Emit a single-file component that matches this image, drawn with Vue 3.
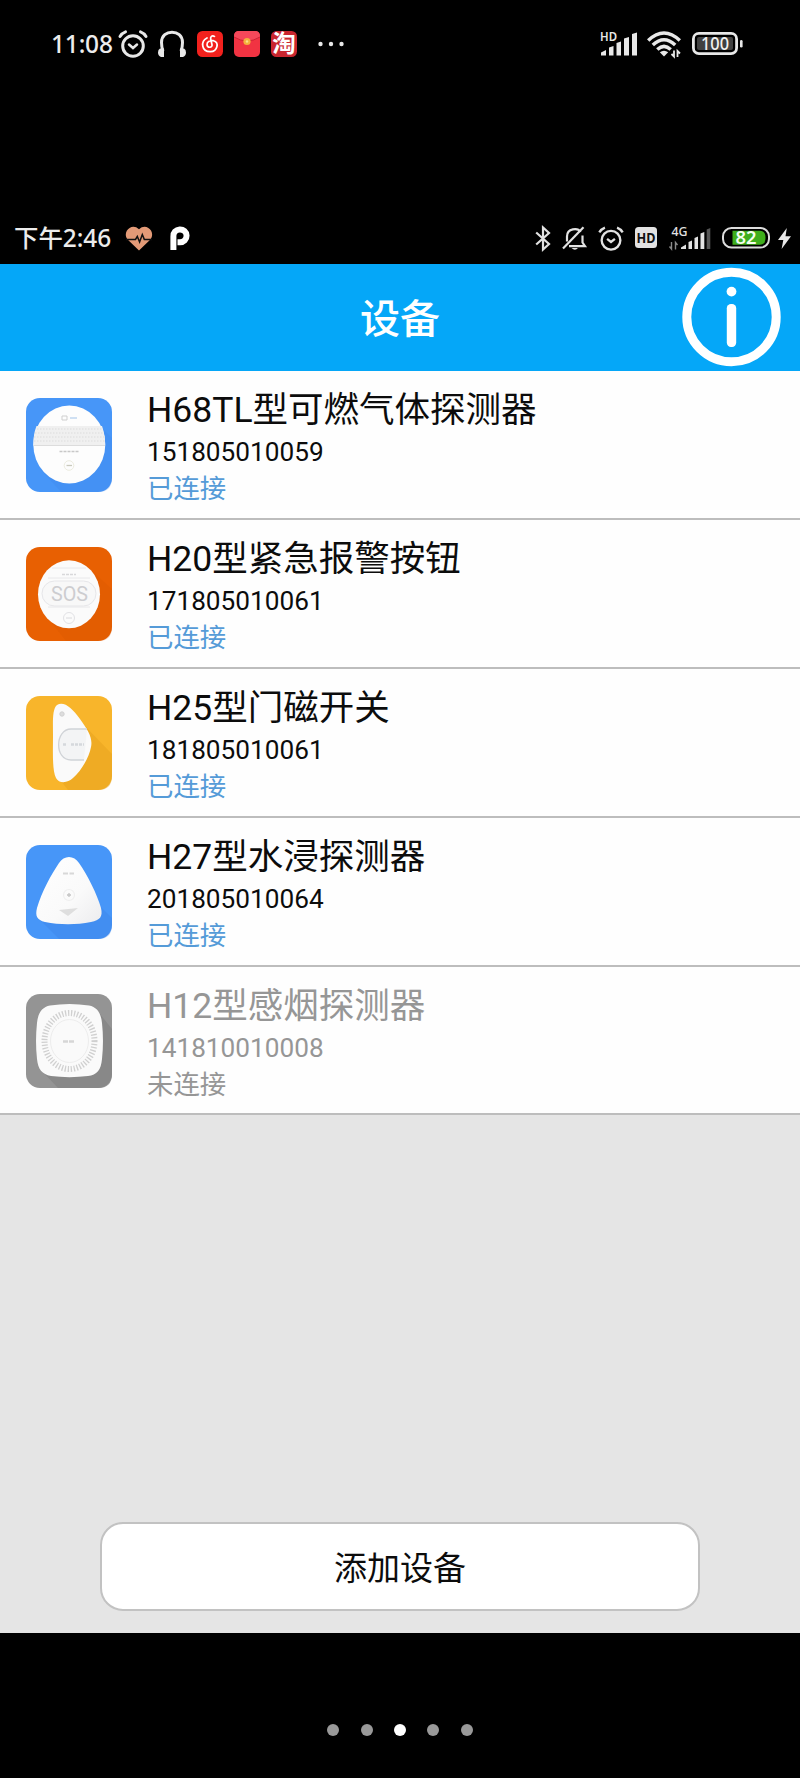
<template>
  <div class="screen">
    <div class="phone-bar">
      <span class="clock">11:08</span>
      <svg class="alarm" width="30" height="28" viewBox="0 0 30 28">
        <g fill="none" stroke="#e8e8e8" stroke-width="3" stroke-linecap="round">
          <circle cx="15" cy="16" r="10.3" />
          <path d="M2 6.5 Q4 3 7.5 1.8 M28 6.5 Q26 3 22.5 1.8" />
          <path d="M11 14.5 L15 18 L19 14.5" stroke-width="2.5" />
        </g>
      </svg>
      <svg class="phones" width="28" height="28" viewBox="0 0 28 28">
        <path d="M5 21 Q3.5 17 3.5 12.5 C3.5 -1.3 24.5 -1.3 24.5 12.5 Q24.5 17 23 21" fill="none" stroke="#e8e8e8" stroke-width="3" />
        <path d="M2 18.5 H6 V27 H3 Q0 25.5 0 22.5 Q0 19.5 2 18.5Z M26 18.5 H22 V27 H25 Q28 25.5 28 22.5 Q28 19.5 26 18.5Z" fill="#e8e8e8" />
      </svg>
      <svg class="app" width="26" height="26" viewBox="0 0 26 26">
        <rect width="26" height="26" rx="5.5" fill="#f2211d" />
        <path d="M17.5 5.4 C15 4 13.2 5.8 13.7 8.2 L15 13.5 C15.7 17 10.3 17.3 10 13.6 C9.8 10.5 13.5 9 16.5 9.7 C22.5 11.5 20.5 20.5 13.5 20.7 C4.5 21 3.2 10.5 10 7" fill="none" stroke="#fff" stroke-width="1.7" stroke-linecap="round" />
      </svg>
      <svg class="app" width="26" height="26" viewBox="0 0 26 26">
        <rect width="26" height="26" rx="5" fill="#f13342" />
        <path d="M0 5 Q0 0 5 0 H21 Q26 0 26 5 V6 Q13 14 0 6Z" fill="#f5485a" />
        <path d="M0 6 Q13 14 26 6" fill="none" stroke="#c81f30" stroke-width=".9" />
        <circle cx="13" cy="10.5" r="3.6" fill="#f3b13c" />
        <circle cx="13" cy="10.5" r="1.2" fill="#fbe08a" />
      </svg>
      <svg class="app" width="26" height="26" viewBox="0 0 26 26">
        <rect width="26" height="26" rx="5.5" fill="#c9262f" />
        <text x="13" y="21.3" text-anchor="middle" font-size="23.5" font-weight="700" fill="#fff">淘</text>
      </svg>
      <svg class="more" width="26" height="6" viewBox="0 0 26 6" fill="#e8e8e8">
        <circle cx="2.5" cy="3" r="2.2" /><circle cx="13" cy="3" r="2.2" /><circle cx="23.5" cy="3" r="2.2" />
      </svg>

      <svg class="push" width="38" height="26" viewBox="0 0 38 26" fill="#e8e8e8">
        <text x="0" y="9.6" font-size="12.5" font-weight="600" textLength="17" lengthAdjust="spacingAndGlyphs">HD</text>
        <path d="M1 24.5 V21.5 L6 19 V24.5Z M9 24.5 V16.5 L13.5 15 V24.5Z M16.5 24.5 V12 L21 10.5 V24.5Z M24 24.5 V7.5 L29 6 V24.5Z M32 24.5 V3 L37 1.5 V24.5Z" />
      </svg>
      <svg class="wifi" width="34" height="27" viewBox="0 0 34 27">
        <g fill="none" stroke="#e8e8e8" stroke-width="3.5">
          <path d="M1.2 9.5 Q17 -5.5 32.8 9.5" />
          <path d="M5.8 14 Q17 3.5 28.2 14" />
          <path d="M10.3 18.5 Q17 12.2 23.7 18.5" />
        </g>
        <path d="M12.8 21.3 Q17 18.2 21.2 21.3 L17 25.5Z" fill="#e8e8e8" />
        <path d="M27 19.5 V25.5 L24.5 23 M30.5 26 V20 L33 22.5" fill="none" stroke="#e8e8e8" stroke-width="1.8" />
      </svg>
      <svg class="battery" width="51" height="24" viewBox="0 0 51 24">
        <rect x="1.4" y="1.4" width="43.2" height="20.2" rx="5.5" fill="none" stroke="#e8e8e8" stroke-width="2.8" />
        <rect x="5" y="5" width="36" height="13" rx="2" fill="#404040" />
        <rect x="48" y="8" width="2.6" height="7.5" rx="1.3" fill="#e8e8e8" />
        <text x="23" y="17.8" text-anchor="middle" font-size="17.5" font-weight="500" fill="#f2f2f2" textLength="28" lengthAdjust="spacingAndGlyphs">100</text>
      </svg>
    </div>

    <div class="inner-bar">
      <span class="clock">下午2:46</span>
      <svg class="heart" width="28" height="25" viewBox="0 0 28 25">
        <path d="M14 24.5 L2.3 13.2 C-3 5.5 7 -4 14 3.2 C21 -4 31 5.5 25.7 13.2Z" fill="#e39a77" />
        <path d="M1 13.4 H10.5 L12.3 10.5 L14.6 16 L17.3 8.5 L19.3 13.4 H27" fill="none" stroke="#111" stroke-width="1.5" />
      </svg>
      <svg class="letter" width="20" height="25" viewBox="0 0 20 25">
        <path d="M3.4 24 V10.3 A6.6 6.4 0 1 1 10 16.2 H7.5" fill="none" stroke="#fff" stroke-width="6" />
      </svg>

      <svg class="push" width="16" height="25" viewBox="0 0 16 25">
        <path d="M1.2 6.5 L14 18 L8 23.5 V1.5 L14 7 L1.2 18.5" fill="none" stroke="#e2e2e2" stroke-width="2.2" />
      </svg>
      <svg class="bell" width="25" height="25" viewBox="0 0 25 25">
        <g fill="none" stroke="#e2e2e2" stroke-width="2.2">
          <path d="M5 15.5 V10.5 C5 2 16 1.5 18.5 6" />
          <path d="M7 20.2 H23 L20.5 16.5 V9.5" />
          <path d="M1 22.5 L21.5 1.3" />
        </g>
        <path d="M9.5 22 H16 Q13 25.5 9.5 22Z" fill="#e2e2e2" />
      </svg>
      <svg class="alarm2" width="26" height="25" viewBox="0 0 30 28">
        <g fill="none" stroke="#e2e2e2" stroke-width="2.7">
          <circle cx="15" cy="16" r="10.8" />
          <path d="M1.5 7 Q4 3 8 1.5 M28.5 7 Q26 3 22 1.5" />
          <path d="M10.5 14.5 L15 18 L19.5 14.5" />
        </g>
      </svg>
      <svg class="hd" width="22" height="22" viewBox="0 0 22 22">
        <rect width="22" height="21" rx="3.5" fill="#e2e2e2" />
        <text x="11" y="15.8" text-anchor="middle" font-size="14.5" font-weight="700" fill="#111" textLength="19" lengthAdjust="spacingAndGlyphs">HD</text>
      </svg>
      <svg class="cell" width="42" height="25" viewBox="0 0 42 25" fill="#e2e2e2">
        <text x="2.5" y="9.5" font-size="12.5" font-weight="500" textLength="16" lengthAdjust="spacingAndGlyphs">4G</text>
        <path d="M2.5 16 V23 L.5 20.5 M6.5 23.5 V16.5 L8.5 19" fill="none" stroke="#8a8a8a" stroke-width="1.4" />
        <path d="M12 23 V21.5 L17 18.5 V23Z M19.5 23 V16 L23 14.5 V23Z M25.5 23 V12 L29 10.5 V23Z M31.5 23 V7.5 L35.3 6 V23Z" />
        <path d="M37.7 23 V3.5 L41.3 2 V23Z" fill="#555" />
      </svg>
      <svg class="battery2" width="48" height="22" viewBox="0 0 48 22">
        <rect x="1" y="1" width="46" height="19.5" rx="8.5" fill="none" stroke="#dcdcdc" stroke-width="2" />
        <path d="M10.5 3.7 H38 Q43.5 4 43.5 10.7 Q43.5 17.5 38 17.8 H10.5Z" fill="#3fae1c" />
        <text x="24" y="17" text-anchor="middle" font-size="18" font-weight="600" fill="#f4fff0" textLength="21" lengthAdjust="spacingAndGlyphs">82</text>
      </svg>
      <svg class="bolt" width="13" height="21" viewBox="0 0 13 21">
        <path d="M8.8 0 L0 12 H5.3 L3.6 21 L13 8.3 H7.5Z" fill="#e8e8e8" />
      </svg>
    </div>

    <header class="title-bar">
      <h1>设备</h1>
      <svg class="info" width="99" height="100" viewBox="0 0 99 100">
        <circle cx="49.5" cy="50" r="44.7" fill="none" stroke="#fff" stroke-width="9" />
        <circle cx="49.5" cy="24.6" r="4.9" fill="#fff" />
        <rect x="44.8" y="37" width="9.4" height="43" rx="4.2" fill="#fff" />
      </svg>
    </header>

    <ul class="devices">
      <li v-for="d in devices" :key="d.serial" :class="{ offline: !d.online }">
        <svg class="thumb" width="86" height="94" viewBox="0 0 86 94">
          <defs>
            <linearGradient id="shell" x1="0" y1="0" x2="1" y2="1">
              <stop offset="0" stop-color="#fff" />
              <stop offset=".6" stop-color="#fafafa" />
              <stop offset="1" stop-color="#ececee" />
            </linearGradient>
          </defs>
          <rect width="86" height="94" rx="14" :fill="d.color" />

          <g v-if="d.kind === 'gas'">
            <path d="M15 72 L35 94 H72 Q86 94 86 80 V40 L76 30Z" fill="#3f88ea" opacity=".3" />
            <ellipse cx="43.3" cy="46.5" rx="36" ry="39" fill="#fdfdfd" />
            <path d="M10.5 28 H76 Q79.5 38 79 47 H7.5 Q7 37 10.5 28Z" fill="#f0f0f0" />
            <path d="M11 31 H77 M9 35 H78 M8 39 H79 M8 43 H79" stroke="#e2e2e2" stroke-width="1.5" stroke-dasharray="1.5 1.5" />
            <path d="M7.5 47.5 H79" stroke="#dcdcdc" />
            <path d="M36 18 H41 V22 H36Z" fill="none" stroke="#cfcfcf" />
            <path d="M44 20 H51" stroke="#cfe0f3" stroke-width="2" />
            <path d="M33.5 53.5 H53" stroke="#c8c8c8" stroke-width="1.4" stroke-dasharray="3 1" />
            <circle cx="43" cy="67.5" r="4.8" fill="none" stroke="#ecece0" />
            <path d="M40.5 67.5 H46" stroke="#c9c9bc" stroke-width="1.3" />
          </g>

          <g v-else-if="d.kind === 'sos'">
            <path d="M21 70 L40 94 H72 Q86 94 86 80 V42 L67 25Z" fill="#d65500" opacity=".3" />
            <ellipse cx="43" cy="47.3" rx="31" ry="34" fill="#fbfbfb" />
            <path d="M26 21 H60 M22 31 H64 M22 60 H64" stroke="#e8e8ea" />
            <path d="M36 27.5 H50" stroke="#d8d8da" stroke-width="1.4" stroke-dasharray="3 1" />
            <rect x="16" y="34" width="54" height="25" rx="12.5" fill="#f8f8f8" stroke="#e6e6e9" />
            <text x="43.5" y="53.5" text-anchor="middle" font-size="20" fill="#cdcdd0" textLength="37" lengthAdjust="spacingAndGlyphs">SOS</text>
            <circle cx="43" cy="71" r="5.5" fill="none" stroke="#e2e2e5" />
            <path d="M40 71 H46" stroke="#dadadd" />
          </g>

          <g v-else-if="d.kind === 'door'">
            <path d="M57 28 L86 58 V80 Q86 94 72 94 H42 L35 85Z" fill="#e5a11d" opacity=".5" />
            <path d="M31 9 C38 5 46 12 54 23 C62 34 67 42 65 51 C63 62 55 75 47 82 C42 87 33 88 30 82 C26 74 27 55 27 40 C27 27 26 13 31 9Z" fill="#fafafa" />
            <path d="M61 33 H45 C29 33 28 64 45 64 H58" fill="#f3f4f5" stroke="#d0d3d7" stroke-width="1.3" />
            <circle cx="36" cy="18" r="2.2" fill="#ddd" stroke="#d2d2d2" />
            <path d="M37 48.5 H41 M45 48.5 H58" stroke="#d5d8dc" stroke-width="2.3" stroke-dasharray="3 1" />
          </g>

          <g v-else-if="d.kind === 'water'">
            <path d="M14 75 L33 94 H72 Q86 94 86 80 V73 L75 62Z" fill="#3a82e4" opacity=".35" />
            <path d="M33 18 C38 10 48 10 53 18 C62 31 71 49 75 63 C77 72 74 75 65 77 C50 80 34 80 19 77 C11 75 9 71 11 63 C16 46 25 30 33 18Z" fill="url(#shell)" />
            <path d="M37 28.5 H48" stroke="#d8d8d8" stroke-width="2.2" stroke-dasharray="5 1.5" />
            <circle cx="43" cy="50" r="5.5" fill="none" stroke="#efefef" stroke-width="1.2" />
            <path d="M41 50 H45 M43 48 V52" stroke="#c4c4c4" stroke-width="1.3" />
            <path d="M33 65 L52 63 L42 71Z" fill="#dedede" />
          </g>

          <g v-else>
            <path d="M14 75 L32 94 H72 Q86 94 86 80 V35 L74 20Z" fill="#858585" opacity=".8" />
            <path d="M24 11.5 C37 9.5 50 9.5 63 11.5 C71 13 75 19 76 29 C77.3 41 77.3 53 76 65 C75 76 71 81 62 82 C50 83.5 37 83.5 25 82 C16 80.5 12 75 11 65 C9.7 53 9.7 41 11 29 C12 19 16 13 24 11.5Z" fill="#fafafa" />
            <ellipse cx="43.5" cy="47" rx="25" ry="28" fill="none" stroke="#d0d0d0" stroke-width="6" stroke-dasharray="1.3 1.7" />
            <ellipse cx="43.5" cy="47" rx="19" ry="21.5" fill="none" stroke="#ededed" />
            <path d="M37 47.5 H49" stroke="#d6d6d6" stroke-width="2.4" stroke-dasharray="5 1" />
          </g>
        </svg>
        <div class="detail">
          <div class="name">{{ d.name }}</div>
          <div class="serial">{{ d.serial }}</div>
          <div class="state">{{ d.online ? '已连接' : '未连接' }}</div>
        </div>
      </li>
    </ul>

    <div class="bottom">
      <button>添加设备</button>
    </div>

    <div class="pager">
      <i v-for="n in 5" :key="n" :class="{ on: n === page }"></i>
    </div>
  </div>
</template>

<script setup>
  import { ref } from 'vue'

  const page = ref(3)

  const devices = [
    { kind: 'gas', color: '#4796f8', name: 'H68TL型可燃气体探测器', serial: '151805010059', online: true },
    { kind: 'sos', color: '#e86002', name: 'H20型紧急报警按钮', serial: '171805010061', online: true },
    { kind: 'door', color: '#f8b52b', name: 'H25型门磁开关', serial: '181805010061', online: true },
    { kind: 'water', color: '#4796f8', name: 'H27型水浸探测器', serial: '201805010064', online: true },
    { kind: 'smoke', color: '#949494', name: 'H12型感烟探测器', serial: '141810010008', online: false }
  ]
</script>

<style>
  body {
    margin: 0;
    background: #000;
  }
</style>

<style scoped>
  .screen {
    width: 800px;
    height: 1778px;
    display: flex;
    flex-direction: column;
    background: #000;
    font-family: Roboto, "Noto Sans CJK SC", sans-serif;
    overflow: hidden;
  }
  svg {
    flex: none;
    display: block;
    overflow: visible;
  }
  .push {
    margin-left: auto;
  }
  .clock {
    font-family: "Noto Sans", "Noto Sans CJK SC", sans-serif;
    color: #ececec;
    white-space: nowrap;
  }

  .phone-bar {
    height: 88px;
    margin-bottom: 124px;
    padding: 0 57px 0 51px;
    box-sizing: border-box;
    display: flex;
    align-items: center;
    font-family: "Noto Sans", "Noto Sans CJK SC", sans-serif;
  }
  .phone-bar .clock {
    width: 67px;
    font-size: 24.5px;
    font-weight: 500;
    line-height: 30px;
    letter-spacing: -.2px;
  }
  .phone-bar .phones {
    margin: 0 10.5px 0 10px;
  }
  .phone-bar .app {
    margin-right: 11px;
  }
  .phone-bar .more {
    margin-left: 10.5px;
  }
  .phone-bar .wifi {
    margin: 0 11px 0 9px;
  }

  .inner-bar {
    height: 52px;
    padding: 0 9px 0 14px;
    box-sizing: border-box;
    display: flex;
    align-items: center;
    font-family: "Noto Sans", "Noto Sans CJK SC", sans-serif;
  }
  .inner-bar .clock {
    width: 111px;
    font-size: 24.4px;
    font-weight: 500;
    line-height: 30px;
  }
  .inner-bar .letter {
    margin-left: 16.5px;
  }
  .inner-bar .bell {
    margin: 0 11px 0 11px;
  }
  .inner-bar .hd {
    margin: 0 12.5px 0 11px;
  }
  .inner-bar .battery2 {
    margin: 0 8px 0 11px;
  }

  .title-bar {
    height: 107px;
    padding: 0 19px;
    box-sizing: border-box;
    display: grid;
    grid-template-columns: 99px 1fr 99px;
    align-items: center;
    background: #05a7f8;
  }
  .title-bar h1 {
    grid-column: 2;
    margin: 4px 0 0;
    text-align: center;
    color: #fff;
    font-size: 40px;
    line-height: 48px;
    font-weight: 500;
  }
  .title-bar .info {
    margin-top: -2px;
  }

  .devices {
    list-style: none;
    margin: 0;
    padding: 0;
    background: #fefefe;
  }
  .devices li {
    height: 148.9px;
    box-sizing: border-box;
    padding: 17px 0 0 26px;
    display: flex;
    border-bottom: 2px solid #bdbdbd;
    color: #0c0c0c;
  }
  .thumb {
    margin: 10px 35px 0 0;
  }
  .name {
    font-size: 35.5px;
    line-height: 44px;
    white-space: nowrap;
  }
  .serial {
    font-size: 26.2px;
    line-height: 41px;
  }
  .state {
    font-size: 26.4px;
    line-height: 33px;
    color: #559bd8;
  }
  .offline .name,
  .offline .serial,
  .offline .state {
    color: #969696;
  }

  .bottom {
    height: 518px;
    padding-bottom: 22px;
    box-sizing: border-box;
    display: flex;
    justify-content: center;
    align-items: flex-end;
    background: #e5e5e5;
  }
  .bottom button {
    width: 600px;
    height: 89px;
    padding: 0 0 2px;
    border: 2px solid #c2c2c2;
    border-radius: 23px;
    background: #fff;
    color: #0c0c0c;
    font-family: inherit;
    font-size: 33px;
  }

  .pager {
    flex: 1;
    padding-top: 49px;
    display: flex;
    justify-content: center;
    align-items: center;
    gap: 21.4px;
  }
  .pager i {
    width: 12px;
    height: 12px;
    border-radius: 50%;
    background: #999;
  }
  .pager .on {
    background: #fff;
  }
</style>
